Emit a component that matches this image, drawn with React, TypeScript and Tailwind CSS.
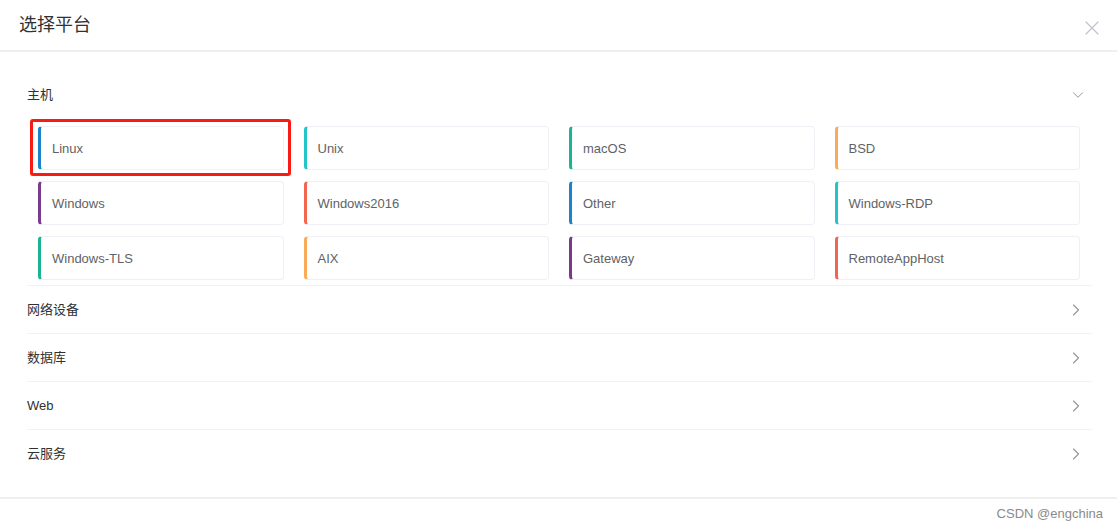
import { ChevronDown, ChevronRight, X } from "lucide-react";

type Platform = {
  name: string;
  color: string;
};

const hostPlatforms: Platform[] = [
  { name: "Linux", color: "border-l-[#1c84c6]" },
  { name: "Unix", color: "border-l-[#23c6c8]" },
  { name: "macOS", color: "border-l-[#1ab394]" },
  { name: "BSD", color: "border-l-[#f8ac59]" },
  { name: "Windows", color: "border-l-[#7b3b8c]" },
  { name: "Windows2016", color: "border-l-[#f2654f]" },
  { name: "Other", color: "border-l-[#1c84c6]" },
  { name: "Windows-RDP", color: "border-l-[#23c6c8]" },
  { name: "Windows-TLS", color: "border-l-[#1ab394]" },
  { name: "AIX", color: "border-l-[#f8ac59]" },
  { name: "Gateway", color: "border-l-[#7b3b8c]" },
  { name: "RemoteAppHost", color: "border-l-[#f2654f]" },
];

const otherCategories = ["网络设备", "数据库", "Web", "云服务"];

function PlatformCard({ platform, selected }: { platform: Platform; selected?: boolean }) {
  return (
    <div className="relative">
      <div
        className={`flex h-[44px] items-center rounded-[4px] border border-[#eef0f5] border-l-[3px] pl-[11px] pt-[1px] text-[13px] text-[#606266] ${platform.color}`}
      >
        {platform.name}
      </div>
      {selected ? (
        <div className="pointer-events-none absolute -top-[7px] -right-[7px] -bottom-[6px] -left-[8px] rounded-[3px] border-[3px] border-[#fa1a14]" />
      ) : null}
    </div>
  );
}

export default function App() {
  return (
    <div
      className="flex h-[529px] w-[1117px] flex-col bg-white"
      style={{ fontFamily: '"Liberation Sans", "Noto Sans CJK SC", sans-serif' }}
    >
      <header className="flex h-[52px] items-center justify-between border-b-2 border-[#efefef] pl-[19px] pr-[13px]">
        <h1 className="text-[18px] leading-none text-[#303133]">选择平台</h1>
        <button type="button" className="mt-[6px] text-[#c0c4cc]">
          <X className="h-[24px] w-[24px]" strokeWidth={1.3} />
        </button>
      </header>

      <div className="flex-1 pt-[19px] pl-[27px] pr-[25px]">
        <section className="border-b border-[#f1f2f5]">
          <div className="flex h-[48px] items-center justify-between pr-[5px] text-[13px] text-[#303133]">
            <span>主机</span>
            <ChevronDown className="h-[18px] w-[18px] text-[#909399]" strokeWidth={1.3} />
          </div>
          <div className="mt-[7px] mb-[5px] grid grid-cols-4 gap-x-[20px] gap-y-[11px] pl-[11px] pr-[12px]">
            {hostPlatforms.map((p) => (
              <PlatformCard key={p.name} platform={p} selected={p.name === "Linux"} />
            ))}
          </div>
        </section>

        {otherCategories.map((name, i) => (
          <section
            key={name}
            className={i < otherCategories.length - 1 ? "border-b border-[#f1f2f5]" : ""}
          >
            <div className="flex h-[47px] items-center justify-between pr-[6px] text-[13px] text-[#303133]">
              <span>{name}</span>
              <ChevronRight className="h-[20px] w-[20px] text-[#909399]" strokeWidth={1.3} />
            </div>
          </section>
        ))}
      </div>

      <footer className="flex h-[32px] items-center justify-end border-t-2 border-[#efefef] pr-[14px] text-[13px] text-[#8a8a8a]">
        CSDN @engchina
      </footer>
    </div>
  );
}
